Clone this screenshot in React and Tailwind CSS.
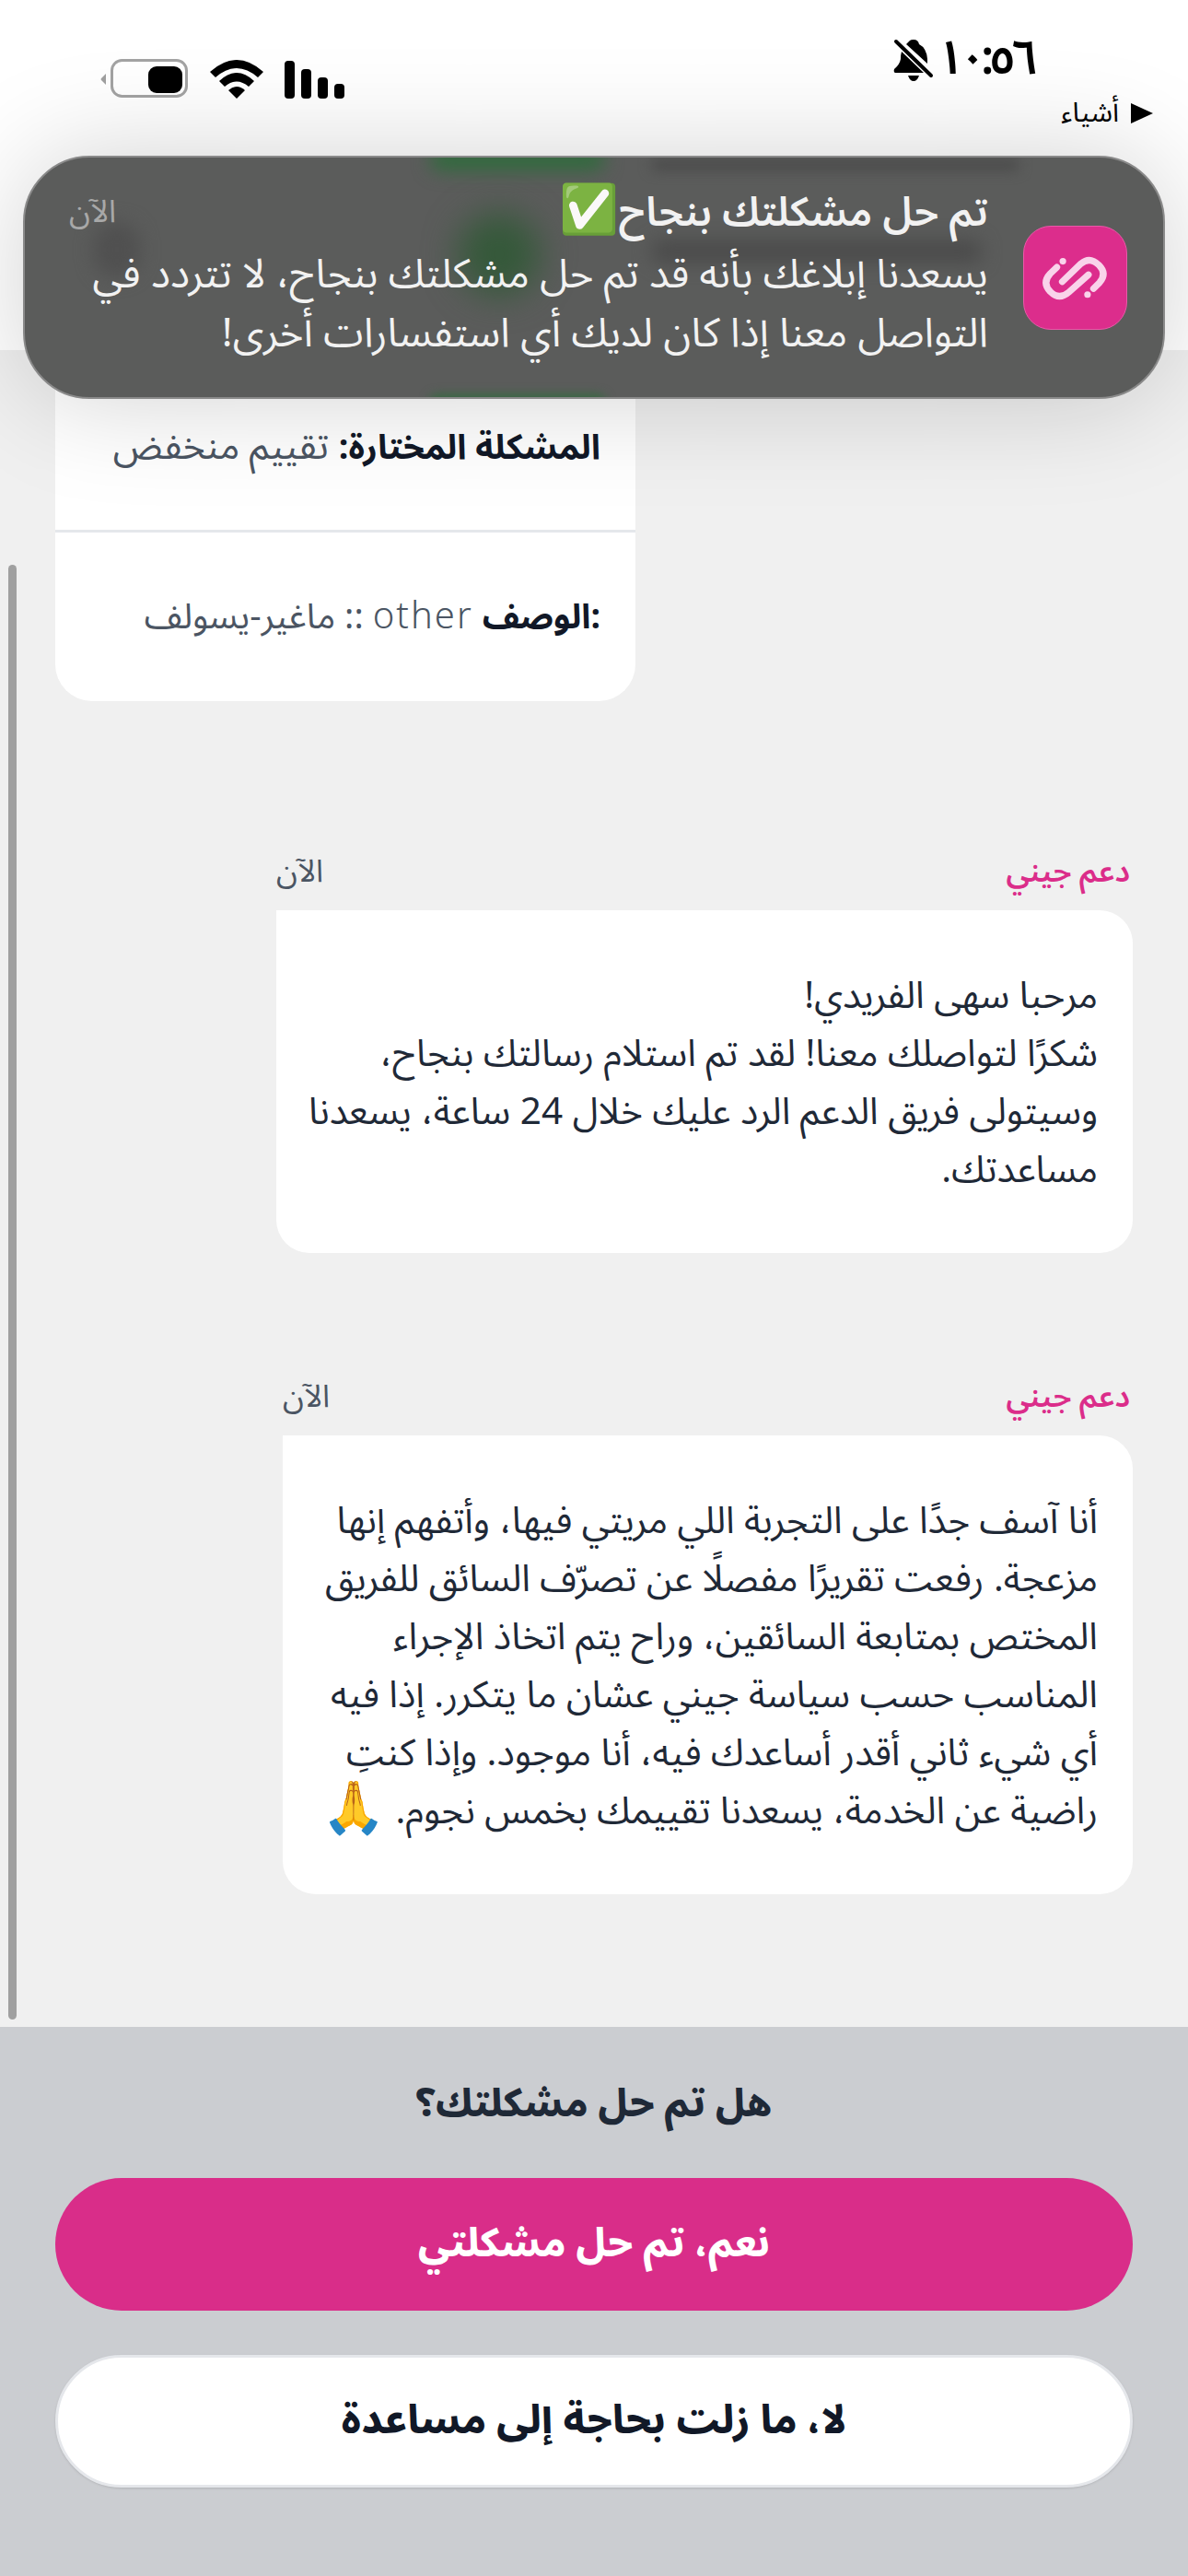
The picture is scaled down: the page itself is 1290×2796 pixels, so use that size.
import React from 'react';

const FONT = "font-['Noto_Sans_Arabic','Noto_Sans','DejaVu_Sans',sans-serif]";

const BatteryIcon = () => (
  <svg width="96" height="44" viewBox="0 0 96 44">
    <path d="M6 16 L1 21 Q0 22 1 23 L6 28 Z" fill="#a0a0a0" />
    <rect x="12.5" y="1.5" width="81" height="39" rx="11" fill="none" stroke="#a3a3a3" strokeWidth="3" />
    <rect x="52" y="8" width="37" height="29" rx="9" fill="#000" />
  </svg>
);

const WifiIcon = () => (
  <svg width="58" height="44" viewBox="0 0 58 44" fill="#000">
    <path d="M0 14 Q29 -12 58 14 L52 20 Q29 0 6 20 Z" />
    <path d="M10 24 Q29 6 48 24 L42 30 Q29 19 16 30 Z" />
    <path d="M20 34 Q29 26 38 34 L29 43 Z" />
  </svg>
);

const SignalIcon = () => (
  <div className="flex items-end gap-[7px] h-[41px]">
    <div className="w-[11px] h-[41px] rounded-[4px] bg-black" />
    <div className="w-[11px] h-[32px] rounded-[4px] bg-black" />
    <div className="w-[11px] h-[23px] rounded-[4px] bg-black" />
    <div className="w-[11px] h-[16px] rounded-[4px] bg-black" />
  </div>
);

const BellOffIcon = () => (
  <svg width="44" height="46" viewBox="0 0 44 46" fill="#000">
    <path d="M22 1 Q27 1 28 6 Q36 10 37 22 L37 27 L14 6 Q17 3 18 2 Q19 1 22 1 Z" />
    <path d="M9 14 L33 37 L2 37 Q0 36 1 33 Q7 28 8 22 Q8 17 9 14 Z" />
    <path d="M16 40 L28 40 Q26 46 22 46 Q18 46 16 40 Z" />
    <path d="M3 3 L41 40" stroke="#000" strokeWidth="4" strokeLinecap="round" />
  </svg>
);

const AppIcon = () => (
  <div className="w-[113px] h-[113px] shrink-0 rounded-[30px] bg-[#dc2d8c] border border-[#e85aa8]">
    <svg width="111" height="111" viewBox="92 72 338 340" fill="none" stroke="#f9d3ea" strokeWidth="22" strokeLinecap="round">
      <path d="M200 207 L178 228 Q150 258 178 288 Q208 318 240 290 L305 232" />
      <path d="M322 278 L342 258 Q368 228 340 200 Q310 170 280 195 L218 255" />
      <circle cx="220" cy="187" r="11" fill="#f9d3ea" stroke="none" />
      <circle cx="302" cy="298" r="11" fill="#f9d3ea" stroke="none" />
    </svg>
  </div>
);

const Message = ({ width, lines }) => (
  <div className={`flex flex-col gap-[19px] ${width}`}>
    <div className="flex items-center justify-between h-[45px]">
      <span className="text-[33px] font-semibold text-[#db2d8a] mr-[3px]">دعم جيني</span>
      <span className="text-[34px] text-[#4b5563]">الآن</span>
    </div>
    <div className="bg-white rounded-[36px] rounded-tl-none px-[38px] pt-[62px] pb-[58px]">
      {lines.map((line, i) => (
        <p key={i} className="text-[40.5px] leading-[63px] text-[#1f2937] whitespace-nowrap">{line}</p>
      ))}
    </div>
  </div>
);

export default function App() {
  return (
    <div dir="rtl" className={`relative w-[1290px] h-[2796px] overflow-hidden flex flex-col bg-[#f0f0f0] ${FONT}`}>
      {/* status bar */}
      <header className="h-[380px] shrink-0 bg-white">
        <div className="flex justify-between pt-[42px] pr-[163px] pl-[109px]">
          <div className="flex items-center gap-[3px] h-[46px]">
            <div dir="ltr" className="flex text-[52px] leading-none font-semibold text-black mt-[-3px]">
              <span>١</span>
              <span className="ml-[-6px]">٠</span>
              <span className="ml-[-6px]">:</span>
              <span className="ml-[-6px]">٥</span>
              <span className="ml-[-6px]">٦</span>
            </div>
            <BellOffIcon />
          </div>
          <div className="flex items-center gap-[23px] mt-[23px] h-[42px]" dir="ltr">
            <BatteryIcon />
            <WifiIcon />
            <SignalIcon />
          </div>
        </div>
        <div className="flex items-center gap-[13px] pr-[38px] mt-[-2px] text-[30px] leading-[36px] text-black">
          <svg width="24" height="22" viewBox="0 0 24 22" fill="#000"><path d="M0 0 L24 11 L0 22 Z" /></svg>
          <span>أشياء</span>
        </div>
      </header>

      {/* chat */}
      <main className="flex-1 flex flex-col items-start px-[60px]">
        <section className="w-[630px] bg-white rounded-b-[40px] self-end">
          <div className="pt-[74px] pb-[57px] px-[38px] text-[41px] leading-[63px] text-[#4b5563] border-b-[3px] border-[#e5e7eb]">
            <b className="text-[37.5px] font-bold text-[#111827]">المشكلة المختارة:</b> تقييم منخفض
          </div>
          <div className="pt-[60px] pb-[59px] px-[38px] text-[38.5px] leading-[63px] text-[#4b5563]">
            <b className="text-[37px] font-bold text-[#111827]">:الوصف</b> <span className="text-[40px] font-light tracking-[2px]">other</span> :: ماغير-يسولف
          </div>
        </section>
        <div className="mt-[163px]">
          <Message
            width="w-[930px]"
            lines={[
              'مرحبا سهى الفريدي!',
              'شكرًا لتواصلك معنا! لقد تم استلام رسالتك بنجاح،',
              'وسيتولى فريق الدعم الرد عليك خلال 24 ساعة، يسعدنا',
              'مساعدتك.',
            ]}
          />
        </div>
        <div className="mt-[134px]">
          <Message
            width="w-[923px]"
            lines={[
              'أنا آسف جدًا على التجربة اللي مريتي فيها، وأتفهم إنها',
              'مزعجة. رفعت تقريرًا مفصلًا عن تصرّف السائق للفريق',
              'المختص بمتابعة السائقين، وراح يتم اتخاذ الإجراء',
              'المناسب حسب سياسة جيني عشان ما يتكرر. إذا فيه',
              'أي شيء ثاني أقدر أساعدك فيه، أنا موجود. وإذا كنتِ',
              <>راضية عن الخدمة، يسعدنا تقييمك بخمس نجوم. <span className="inline-block translate-y-[2px] text-[56px] leading-[40px]">🙏</span></>,
            ]}
          />
        </div>
      </main>

      {/* resolved? */}
      <footer className="h-[596px] shrink-0 bg-[#cbcdd1] flex flex-col items-center px-[60px] pt-[60px] gap-[48px]">
        <h2 className="h-[48px] text-[42px] leading-[48px] font-extrabold text-[#1f2937]">هل تم حل مشكلتك؟</h2>
        <div className="w-full flex flex-col gap-[48px] mt-[8px]">
          <button className="h-[144px] w-full rounded-full bg-[#d92d89] text-[42.5px] font-extrabold text-white">نعم، تم حل مشكلتي</button>
          <button className="h-[144px] w-full rounded-full bg-white border-[3px] border-[#e5e7eb] shadow-sm text-[43px] font-extrabold text-[#111827]">لا، ما زلت بحاجة إلى مساعدة</button>
        </div>
      </footer>

      {/* scrollbar */}
      <div className="absolute left-[9px] top-[613px] w-[9px] h-[1579px] rounded-full bg-[#a0a0a0]" />

      {/* notification banner */}
      <div className="absolute left-[25px] top-[169px] w-[1240px] h-[264px] rounded-[72px] bg-[#5b5c5b] border-[2px] border-[#8a8a8a] overflow-hidden shadow-[0_0_120px_rgba(0,0,0,0.18)]">
        <div className="absolute left-[440px] top-[-10px] w-[190px] h-[24px] rounded-full bg-[#2f6b3c] blur-[10px]" />
        <div className="absolute left-[470px] top-[60px] w-[90px] h-[90px] rounded-full bg-[#35593a] blur-[18px]" />
        <div className="absolute left-[680px] top-[90px] w-[360px] h-[24px] rounded-full bg-[#4a4a4a] blur-[10px]" />
        <div className="absolute left-[680px] top-[2px] w-[400px] h-[12px] rounded-full bg-[#4a4a4a] blur-[7px]" />
        <div className="absolute left-[75px] top-[70px] w-[50px] h-[60px] rounded-full bg-[#505050] blur-[10px]" />
        <div className="absolute left-[440px] bottom-[-12px] w-[190px] h-[14px] rounded-full bg-[#2f6b3c] blur-[6px]" />
        <div className="relative flex items-center gap-[38px] h-full pr-[39px] pl-[48px]">
          <AppIcon />
          <div className="flex-1 self-start pt-[34px] text-[#f2f2f2]">
            <div className="flex justify-between items-center h-[50px] mb-[11px]">
              <p className="text-[44px] leading-[50px] font-semibold whitespace-nowrap">تم حل مشكلتك بنجاح<span className="text-[52px] leading-[50px]">✅</span></p>
              <span className="text-[34px] leading-[50px] text-[#a8a8a8]">الآن</span>
            </div>
            <p className="text-[44px] leading-[64px] whitespace-nowrap">يسعدنا إبلاغك بأنه قد تم حل مشكلتك بنجاح، لا تتردد في</p>
            <p className="text-[44px] leading-[64px] whitespace-nowrap">التواصل معنا إذا كان لديك أي استفسارات أخرى!</p>
          </div>
        </div>
      </div>
    </div>
  );
}
